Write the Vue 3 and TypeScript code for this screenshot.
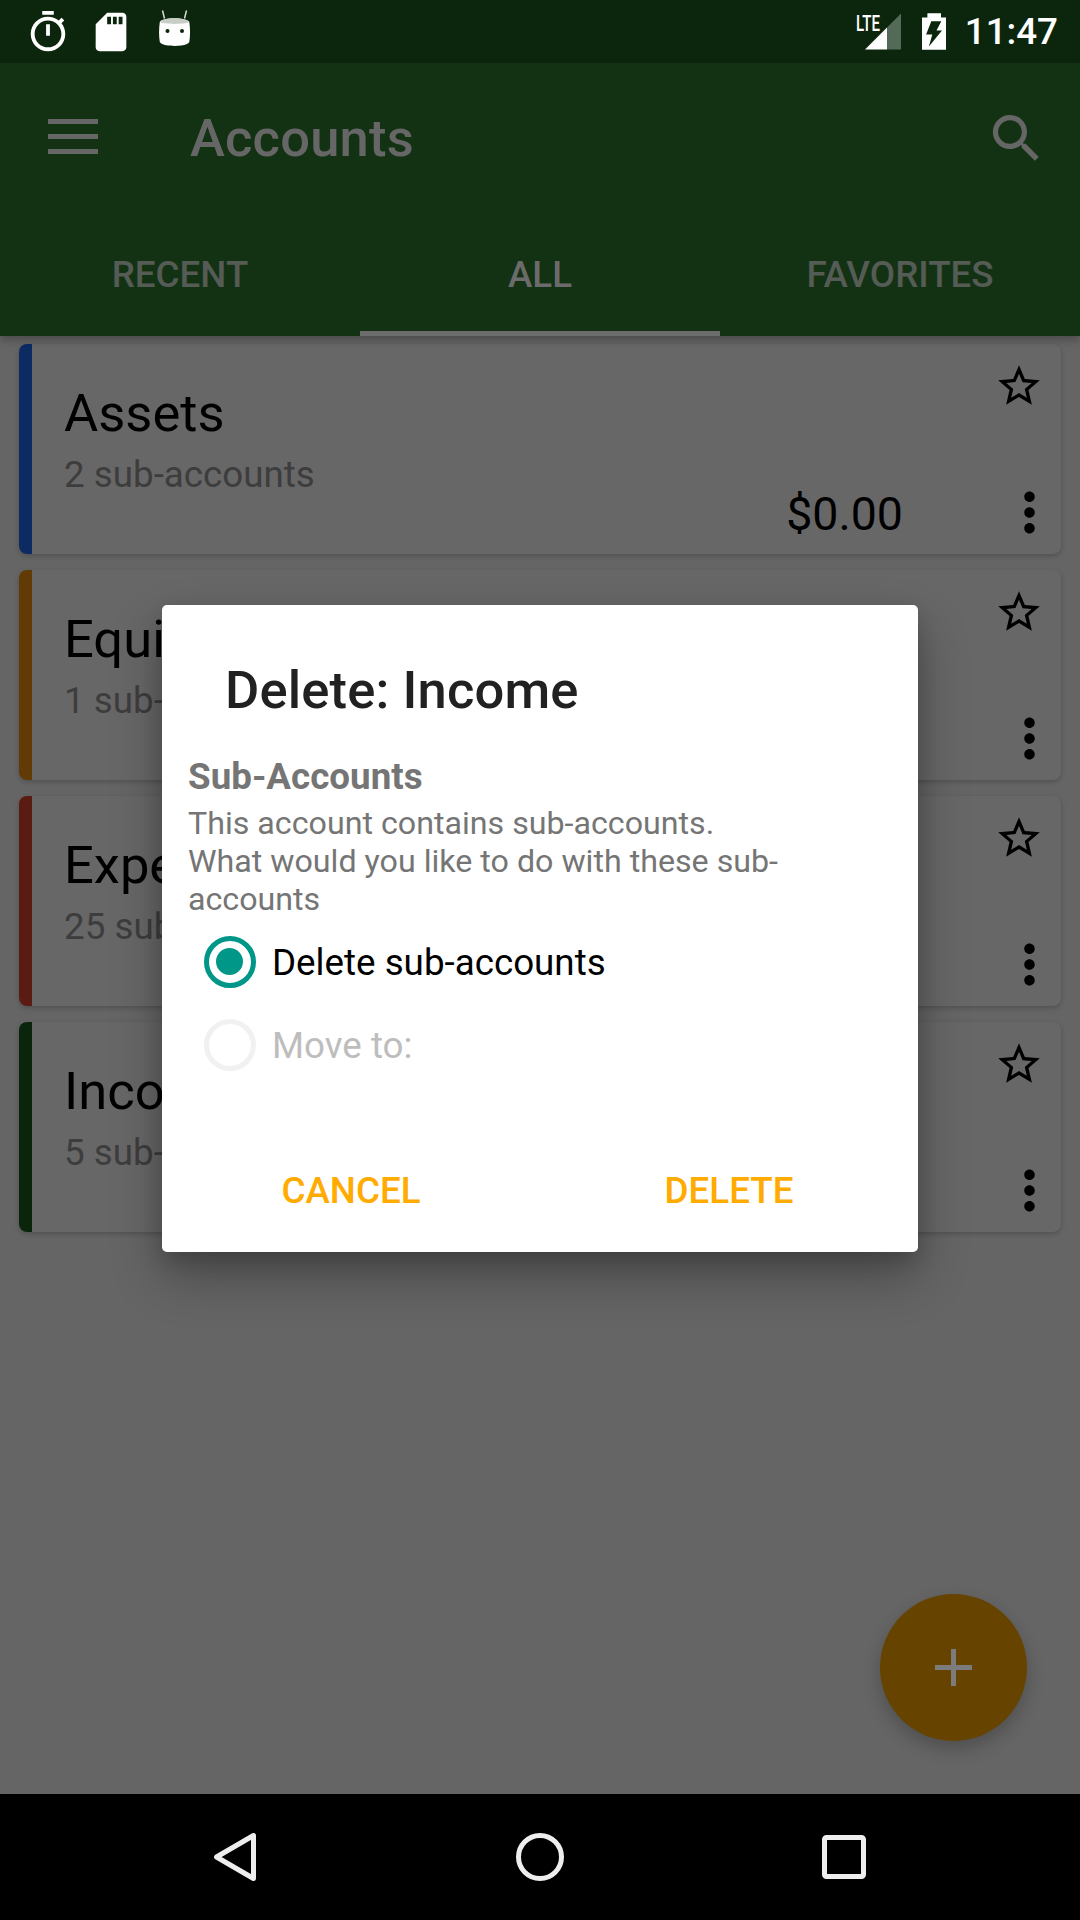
<script setup lang="ts">
import { ref } from 'vue'

interface Account {
  name: string
  detail: string
  color: string
}

const accounts: Account[] = [
  { name: 'Assets', detail: '2 sub-accounts', color: '#0c2b63' },
  { name: 'Equity', detail: '1 sub-account', color: '#613a05' },
  { name: 'Expenses', detail: '25 sub-accounts', color: '#5a1b13' },
  { name: 'Income', detail: '5 sub-accounts', color: '#0b240c' },
]

const tabs = ['RECENT', 'ALL', 'FAVORITES']
const activeTab = ref(1)
const deleteChildren = ref(true)
</script>

<template>
  <div class="phone">
    <div class="status-bar">
      <div class="status-left">
        <svg class="status-icon" viewBox="0 0 24 24">
          <path d="M15 1H9v2h6V1zm-4 13h2V8h-2v6zm8.03-6.61l1.42-1.42c-.43-.51-.9-.99-1.41-1.41l-1.42 1.42C16.07 4.74 14.12 4 12 4c-4.97 0-9 4.03-9 9s4.02 9 9 9 9-4.03 9-9c0-2.12-.74-4.07-1.97-5.61zM12 20c-3.87 0-7-3.13-7-7s3.13-7 7-7 7 3.13 7 7-3.13 7-7 7z" />
        </svg>
        <svg class="status-icon" viewBox="0 0 24 24">
          <path d="M18 2h-8L4.02 8 4 20c0 1.1.9 2 2 2h12c1.1 0 2-.9 2-2V4c0-1.1-.9-2-2-2zm-6 6h-2V4h2v4zm3 0h-2V4h2v4zm3 0h-2V4h2v4z" />
        </svg>
        <svg class="status-icon" viewBox="0 1 46 46">
          <path d="M11.5 2.5l2 8M35.5 2.5l-2 8" stroke="#d5dbd5" stroke-width="1.5" fill="none" />
          <path d="M8.8 14c3-5 26-5 29.500 0 1 7 1 14 0 20-1 2-4 3-8 3.500-4 .5-10 .5-13.500 0-4-.5-7-1.500-8-3.500-1-6-1-13 0-20z" />
          <path d="M8.8 14c3-5 26-5 29.500 0-4 2.500-25.500 2.500-29.500 0z" fill="#c6cec6" />
          <circle cx="16.5" cy="23" r="2" fill="#0c260e" />
          <circle cx="31" cy="23" r="2" fill="#0c260e" />
        </svg>
      </div>
      <div class="status-right">
        <svg class="status-icon" viewBox="0 0 46 46">
          <polygon points="31,18.5 45,4.5 45,40.5 31,40.5" fill="#546a58" />
          <polygon points="9,40.5 31,18.5 31,40.5" />
          <text x="0" y="21.5" font-size="22" font-weight="500" textLength="24" lengthAdjust="spacingAndGlyphs" class="lte">LTE</text>
        </svg>
        <svg class="status-icon" viewBox="0 0 46 46">
          <path d="M16.4 4.200h13.600v4.300h5v32.300h-24V8.500h5.400z" />
          <polygon points="20.300,12.200 30.300,12.200 25.500,21.500 31,21.500 17.900,37.500 21.300,25.500 15.100,25.500" fill="#0c260e" />
        </svg>
        <span class="clock">11:47</span>
      </div>
    </div>

    <header class="app-bar">
      <div class="toolbar">
        <div class="menu-icon">
          <span></span>
          <span></span>
          <span></span>
        </div>
        <div class="toolbar-title">Accounts</div>
        <svg class="search-icon" viewBox="0 0 24 24">
          <path d="M15.500 14h-.79l-.28-.27C15.410 12.590 16 11.110 16 9.500 16 5.910 13.090 3 9.500 3S3 5.910 3 9.500 5.910 16 9.500 16c1.610 0 3.090-.59 4.230-1.570l.27.28v.79l5 4.990L20.490 19l-4.990-5zm-6 0C7.010 14 5 11.990 5 9.500S7.010 5 9.500 5 14 7.010 14 9.500 11.990 14 9.500 14z" />
        </svg>
      </div>
      <nav class="tabs">
        <div
          v-for="(tab, index) in tabs"
          :key="tab"
          class="tab"
          :class="{ active: index === activeTab }"
        >
          {{ tab }}
        </div>
      </nav>
    </header>

    <main class="account-list">
      <article v-for="account in accounts" :key="account.name" class="card">
        <div class="stripe" :style="{ background: account.color }"></div>
        <div class="card-info">
          <div class="card-name">{{ account.name }}</div>
          <div class="card-detail">{{ account.detail }}</div>
        </div>
        <div class="card-amount">$0.00</div>
        <div class="card-actions">
          <svg class="star-icon" viewBox="0 0 24 24">
            <path d="M22 9.240l-7.190-.62L12 2 9.190 8.630 2 9.240l5.460 4.730L5.820 21 12 17.270 18.180 21l-1.630-7.030L22 9.240zM12 15.400l-3.760 2.270 1-4.280-3.320-2.880 4.380-.38L12 6.100l1.710 4.040 4.380.38-3.320 2.880 1 4.280L12 15.400z" />
          </svg>
          <svg class="more-icon" viewBox="0 0 24 24">
            <path d="M12 8c1.100 0 2-.9 2-2s-.9-2-2-2-2 .9-2 2 .9 2 2 2zm0 2c-1.100 0-2 .9-2 2s.9 2 2 2 2-.9 2-2-.9-2-2-2zm0 6c-1.100 0-2 .9-2 2s.9 2 2 2 2-.9 2-2-.9-2-2-2z" />
          </svg>
        </div>
      </article>
    </main>

    <nav class="nav-bar">
      <svg class="nav-icon back" viewBox="0 0 42 48">
        <path d="M39.500 2.500v43L2.500 24z" />
      </svg>
      <svg class="nav-icon home" viewBox="0 0 48 48">
        <circle cx="24" cy="24" r="21.500" />
      </svg>
      <svg class="nav-icon recents" viewBox="0 0 44 44">
        <rect x="2.500" y="2.500" width="39" height="39" rx="2" />
      </svg>
    </nav>

    <button class="fab">
      <svg viewBox="0 0 37 37"><path d="M16 0h5v16h16v5H21v16h-5V21H0v-5h16z" /></svg>
    </button>

    <div class="dialog-layer">
      <section class="dialog">
        <h2 class="dialog-title">Delete: Income</h2>
        <div class="dialog-body">
          <div class="section-title">Sub-Accounts</div>
          <p class="section-text">This account contains sub-accounts.<br />What would you like to do with these sub-accounts</p>
          <div class="radio-group">
            <div class="radio-row">
              <span class="radio" :class="{ checked: deleteChildren }"></span>
              <span class="radio-label">Delete sub-accounts</span>
            </div>
            <div class="radio-row disabled">
              <span class="radio"></span>
              <span class="radio-label">Move to:</span>
            </div>
          </div>
        </div>
        <div class="dialog-actions">
          <button class="dialog-btn">CANCEL</button>
          <button class="dialog-btn">DELETE</button>
        </div>
      </section>
    </div>
  </div>
</template>

<style scoped>
.phone {
  position: relative;
  display: flex;
  flex-direction: column;
  width: 1080px;
  height: 1920px;
  overflow: hidden;
  background: #656565;
  font-family: Roboto, "Noto Sans", sans-serif;
}

/* status bar */
.status-bar {
  display: flex;
  flex: none;
  justify-content: space-between;
  align-items: center;
  height: 63px;
  padding: 0 22px 0 25px;
  box-sizing: border-box;
  background: #0c260e;
}

.status-left,
.status-right {
  display: flex;
  align-items: center;
}

.status-left {
  gap: 17px;
}

.status-right {
  gap: 9px;
}

.status-icon {
  width: 46px;
  height: 46px;
  fill: #fff;
}

.lte {
  font-family: Roboto, sans-serif;
}

.clock {
  margin-left: -1px;
  color: #fff;
  font-size: 36.75px;
  font-weight: 500;
  line-height: 63px;
}

/* toolbar and tabs */
.app-bar {
  position: relative;
  z-index: 1;
  flex: none;
  background: #133214;
  box-shadow: 0 4px 8px rgba(0, 0, 0, 0.25);
}

.toolbar {
  display: flex;
  align-items: center;
  height: 147px;
  padding: 3px 32px 0 48px;
  box-sizing: border-box;
}

.menu-icon {
  display: flex;
  flex-direction: column;
  gap: 10px;
  width: 50px;
  margin: 0 92px 4px 0;
}

.menu-icon span {
  height: 5px;
  background: #666;
}

.toolbar-title {
  flex: 1;
  color: #666;
  font-size: 52.5px;
  font-weight: 500;
  letter-spacing: 0.2px;
}

.search-icon {
  width: 63px;
  height: 63px;
  fill: #666;
}

.tabs {
  display: flex;
  height: 126px;
}

.tab {
  flex: 1;
  padding-top: 5px;
  box-sizing: border-box;
  color: #555b55;
  font-size: 36.75px;
  font-weight: 500;
  line-height: 120px;
  text-align: center;
}

.tab.active {
  border-bottom: 5px solid #6c6c6c;
  color: #6b6b6b;
}

/* account cards */
.account-list {
  display: flex;
  flex: 1;
  flex-direction: column;
  gap: 16px;
  padding: 8px 19px 0;
}

.card {
  display: flex;
  height: 210px;
  overflow: hidden;
  border-radius: 8px;
  background: #676767;
  box-shadow: 0 2px 5px rgba(0, 0, 0, 0.2);
}

.stripe {
  flex: none;
  width: 13px;
}

.card-info {
  flex: 1;
  padding: 38px 0 0 32px;
}

.card-name {
  color: #000;
  font-size: 52.5px;
  line-height: 62px;
}

.card-detail {
  margin-top: 9px;
  color: #3d3d3d;
  font-size: 36.75px;
  line-height: 44px;
}

.card-amount {
  align-self: flex-end;
  margin: 0 158px 12px 0;
  color: #000;
  font-size: 46.5px;
  line-height: 56px;
}

.card-actions {
  display: flex;
  flex: none;
  flex-direction: column;
  justify-content: space-between;
  align-items: flex-end;
  margin-left: -80px;
  width: 80px;
  padding: 17px 0 10px;
  box-sizing: border-box;
}

.star-icon {
  width: 50px;
  height: 50px;
  margin-right: 17px;
}

.more-icon {
  width: 63px;
  height: 63px;
}

/* navigation bar */
.nav-bar {
  position: relative;
  z-index: 3;
  display: flex;
  flex: none;
  justify-content: center;
  align-items: center;
  height: 126px;
  background: #000;
}

.nav-icon {
  fill: none;
  stroke: #eee;
  stroke-width: 5;
  stroke-linejoin: round;
}

.nav-icon.back {
  width: 42px;
  height: 48px;
  margin-right: 260px;
}

.nav-icon.home {
  width: 48px;
  height: 48px;
}

.nav-icon.recents {
  width: 44px;
  height: 44px;
  margin-left: 258px;
}

/* floating button */
.fab {
  position: absolute;
  top: 1594px;
  left: 880px;
  display: flex;
  justify-content: center;
  align-items: center;
  width: 147px;
  height: 147px;
  padding: 0;
  border: 0;
  border-radius: 50%;
  background: #664400;
  box-shadow: 0 8px 18px rgba(0, 0, 0, 0.22);
}

.fab svg {
  width: 37px;
  height: 37px;
  fill: #7c7c7c;
}

/* dialog */
.dialog-layer {
  position: absolute;
  top: 63px;
  right: 0;
  bottom: 126px;
  left: 0;
  z-index: 2;
  display: flex;
  justify-content: center;
  align-items: center;
}

.dialog {
  width: 756px;
  height: 647px;
  border-radius: 5px;
  background: #fff;
  box-shadow: 0 24px 50px rgba(0, 0, 0, 0.3), 0 8px 20px rgba(0, 0, 0, 0.14);
}

.dialog-title {
  margin: 0;
  padding: 54px 0 0 63px;
  color: #212121;
  font-size: 52.5px;
  font-weight: 500;
  letter-spacing: 0.15px;
  line-height: 62px;
}

.dialog-body {
  padding: 34px 26px 0;
}

.section-title {
  color: #757575;
  font-size: 36.75px;
  font-weight: 700;
  line-height: 44px;
}

.section-text {
  margin: 5px 0 0;
  color: #757575;
  font-size: 32.2px;
  line-height: 38px;
}

.radio-group {
  margin-top: 3px;
}

.radio-row {
  display: flex;
  align-items: center;
  height: 83px;
  padding-left: 16px;
  color: #000;
  font-size: 36.75px;
}

.radio {
  position: relative;
  width: 52px;
  height: 52px;
  margin: -2px 16px 0 0;
  border: 5.5px solid #f1f1f1;
  border-radius: 50%;
  box-sizing: border-box;
}

.radio.checked {
  border-color: #009688;
}

.radio.checked::after {
  content: "";
  position: absolute;
  top: 7px;
  left: 7px;
  width: 27px;
  height: 27px;
  border-radius: 50%;
  background: #009688;
}

.radio-row.disabled {
  color: #bdbdbd;
}

.dialog-actions {
  display: flex;
  margin-top: 63px;
}

.dialog-btn {
  flex: 1;
  height: 80px;
  padding: 0;
  border: 0;
  background: none;
  color: #ffab00;
  font-family: inherit;
  font-size: 36.75px;
  font-weight: 500;
}
</style>

<style>
body {
  margin: 0;
}
</style>
